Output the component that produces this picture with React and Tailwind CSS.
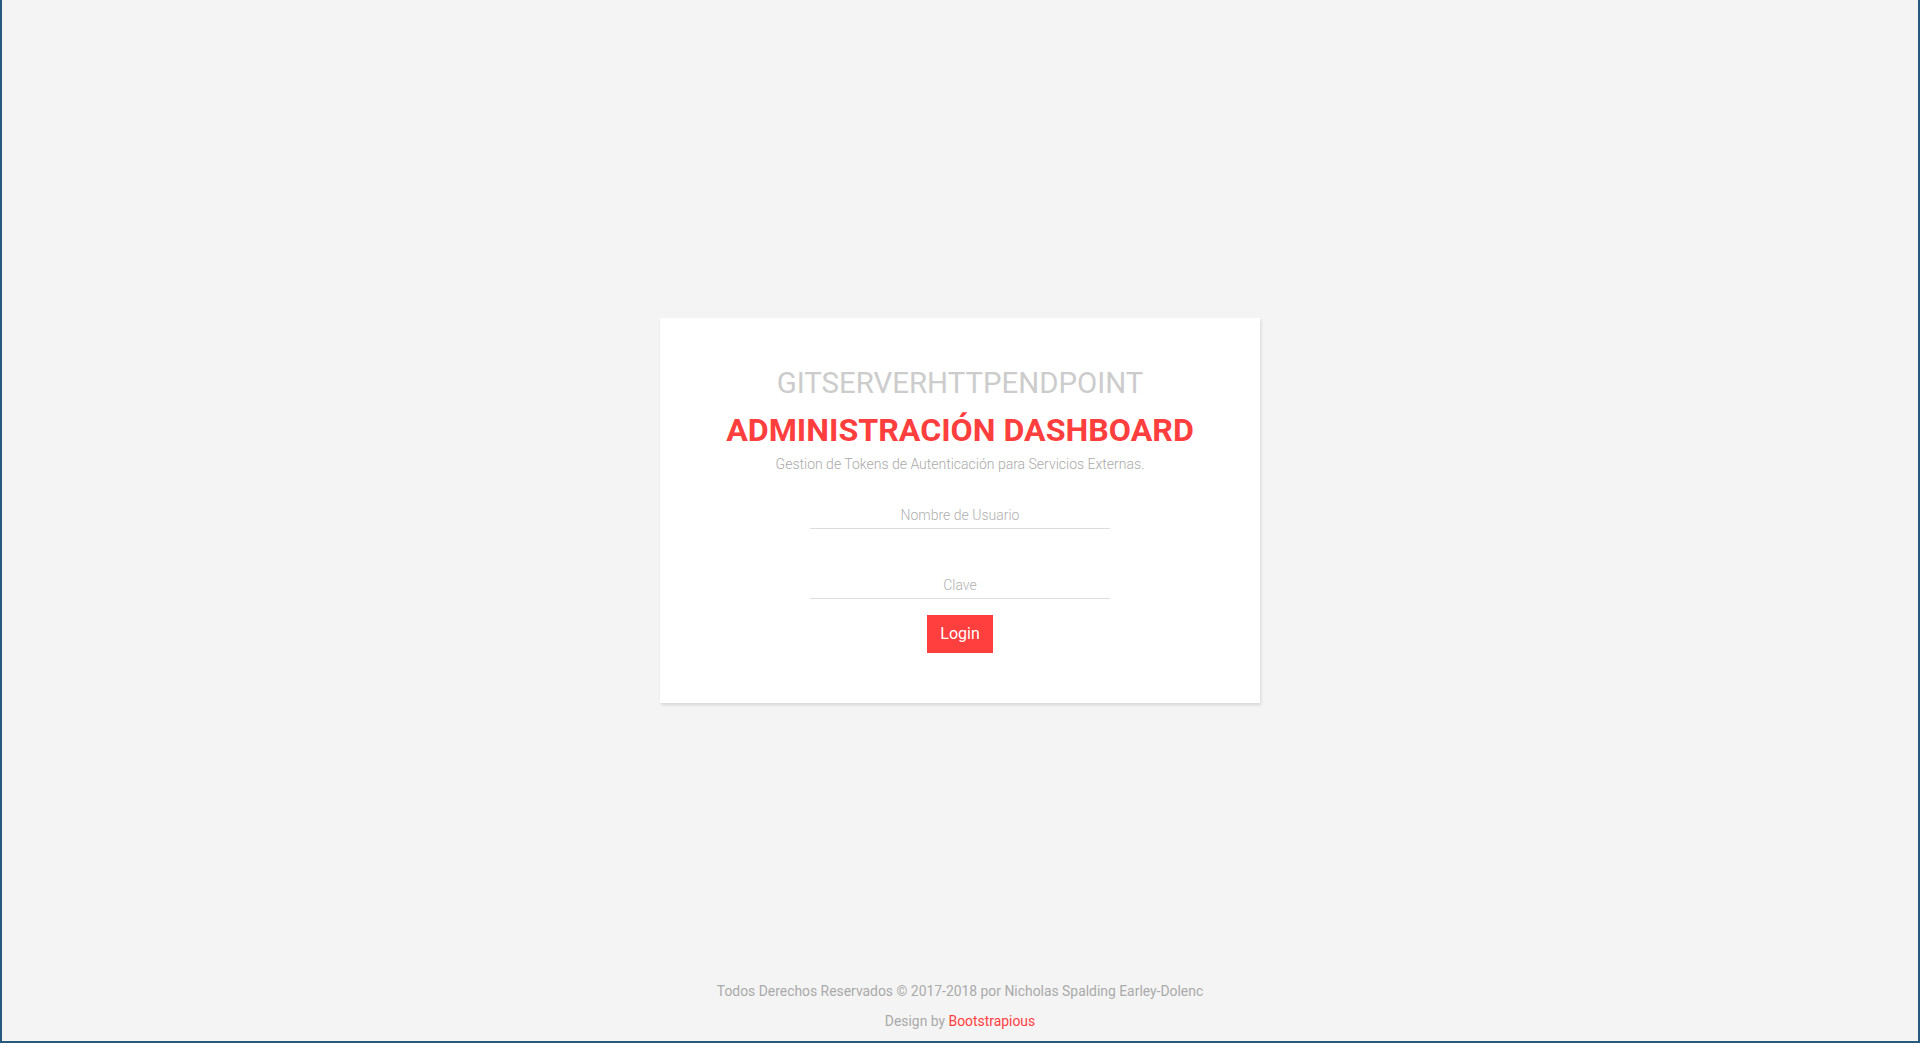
export default function App() {
  return (
    <div
      className="flex h-[1043px] w-full flex-col border-x-2 border-b-2 border-[#285a7e] bg-[#f4f4f4] text-[#999]"
      style={{ fontFamily: "Roboto, 'Liberation Sans', sans-serif" }}
    >
      <main className="flex flex-1 justify-center pt-[318px]">
        <div className="flex h-[385px] w-[600px] flex-col items-center bg-white pt-[47px] shadow-[1px_2px_3px_rgba(0,0,0,0.12)]">
          <h2 className="text-[29.4px] leading-[36px] font-normal text-[#cccccc]">GITSERVERHTTPENDPOINT</h2>
          <h1 className="mt-[10px] text-[32.2px] leading-[38px] font-bold text-[#ff3e3e]">ADMINISTRACIÓN DASHBOARD</h1>
          <p className="mt-[5px] text-[14px] leading-[20px] font-light text-[#aaaaaa]">
            Gestion de Tokens de Autenticación para Servicios Externas.
          </p>
          <form className="mt-[25px] flex flex-col items-center" onSubmit={(e) => e.preventDefault()}>
            <input
              type="text"
              placeholder="Nombre de Usuario"
              className="h-[30px] w-[300px] border-b border-[#dddddd] bg-transparent pt-[2px] text-center text-[14px] font-light text-[#555] outline-none placeholder:text-[#b0b0b0]"
            />
            <input
              type="password"
              placeholder="Clave"
              className="mt-[40px] h-[30px] w-[300px] border-b border-[#dddddd] bg-transparent pt-[2px] text-center text-[14px] font-light text-[#555] outline-none placeholder:text-[#b0b0b0]"
            />
            <button
              type="submit"
              className="mt-[16px] h-[38px] w-[66px] bg-[#ff3e3e] text-[16px] text-white"
            >
              Login
            </button>
          </form>
        </div>
      </main>
      <footer className="flex flex-col items-center gap-[6px] pb-[8px] text-[13.9px] leading-[24px] text-[#aaaaaa]">
        <p>Todos Derechos Reservados © 2017-2018 por Nicholas Spalding Earley-Dolenc</p>
        <p>
          Design by <a href="#" className="text-[#ff3e3e]">Bootstrapious</a>
        </p>
      </footer>
    </div>
  );
}
